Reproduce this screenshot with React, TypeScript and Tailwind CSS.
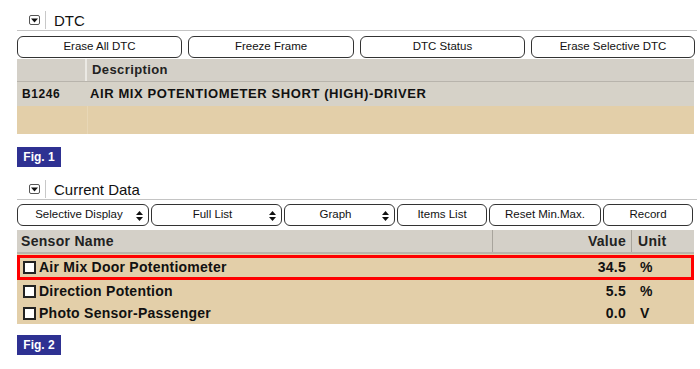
import React from "react";

const F = { fontFamily: '"Liberation Sans", Arial, sans-serif' };

function Toggle() {
  return (
    <div className="w-[11px] h-[10px] border border-[#555] rounded-[2px] bg-white flex items-center justify-center">
      <svg width="7" height="5" viewBox="0 0 7 5"><path d="M0 0.5 L7 0.5 L3.5 4.5 Z" fill="#111" /></svg>
    </div>
  );
}

function SectionHeader({ title }: { title: string }) {
  return (
    <div className="flex items-center h-[21px] border-b border-[#c4c4c4] w-[680px]">
      <div className="ml-[12px]"><Toggle /></div>
      <div className="w-px h-[18px] bg-[#c8c8c8] ml-[5px]" />
      <div className="ml-[8px] text-[15px] text-[#111] leading-none">{title}</div>
    </div>
  );
}

function Btn({ w, label, select }: { w: number; label: string; select?: boolean }) {
  return (
    <div
      className="h-[22px] border border-[#333] rounded-[6px] bg-white flex items-center justify-center text-[11.5px] text-[#111] relative"
      style={{ width: w }}
    >
      <span className={select ? "-ml-[8px]" : ""}>{label}</span>
      {select && (
        <svg className="absolute right-[5px] top-[6px]" width="7" height="10" viewBox="0 0 7 10">
          <path d="M0 4 L3.5 0 L7 4 Z M0 6 L7 6 L3.5 10 Z" fill="#111" />
        </svg>
      )}
    </div>
  );
}

function Fig({ n }: { n: string }) {
  return (
    <div className="w-[44px] h-[20px] bg-[#2e3192] text-white font-bold text-[12px] flex items-center justify-center">
      Fig. {n}
    </div>
  );
}

function Check() {
  return <div className="w-[13px] h-[13px] border-2 border-[#222] bg-white shrink-0" />;
}

const rows = [
  { name: "Air Mix Door Potentiometer", value: "34.5", unit: "%", hl: true },
  { name: "Direction Potention", value: "5.5", unit: "%" },
  { name: "Photo Sensor-Passenger", value: "0.0", unit: "V" },
];

export default function App() {
  return (
    <div className="w-[700px] h-[369px] bg-white pl-[17px] pt-[10px]" style={F}>
      <SectionHeader title="DTC" />
      <div className="flex gap-[6px] mt-[5px]">
        <Btn w={165} label="Erase All DTC" />
        <Btn w={166} label="Freeze Frame" />
        <Btn w={165} label="DTC Status" />
        <Btn w={164} label="Erase Selective DTC" />
      </div>
      <div className="w-[677px] mt-[1px]">
        <div className="flex h-[23px] bg-[#d4d0c8] border-b border-[#b8b4ac]">
          <div className="w-[70px] border-r-2 border-r-[#ebe9e4]" />
          <div className="pl-[5px] flex items-center font-bold text-[13px] text-[#222] tracking-[0.4px]">Description</div>
        </div>
        <div className="flex h-[24px] bg-[#d6d2c8] items-center font-bold text-[12px] text-[#111] tracking-[0.6px]">
          <div className="w-[72px] pl-[5px]">B1246</div>
          <div className="pl-[1px] text-[13px]">AIR MIX POTENTIOMETER SHORT (HIGH)-DRIVER</div>
        </div>
        <div className="flex h-[28px] bg-[#e3cfa9]">
          <div className="w-[71px] border-r border-r-[#e8d7b6]" />
        </div>
      </div>
      <div className="mt-[13px]"><Fig n="1" /></div>

      <div className="mt-[12px]">
        <SectionHeader title="Current Data" />
      </div>
      <div className="flex gap-[2px] mt-[4px] w-[678px]">
        <Btn w={132} label="Selective Display" select />
        <Btn w={131} label="Full List" select />
        <Btn w={111} label="Graph" select />
        <Btn w={90} label="Items List" />
        <Btn w={112} label="Reset Min.Max." />
        <Btn w={90} label="Record" />
      </div>
      <div className="w-[677px] mt-[4px] bg-[#e3cfa9]">
        <div className="flex h-[24px] bg-[#d4d0c8] border-b-2 border-[#b8b4ac] font-bold text-[14px] tracking-[0.3px] text-[#222] items-center">
          <div className="w-[476px] pl-[4px] h-full flex items-center border-r border-r-[#a8a49c]">Sensor Name</div>
          <div className="w-[139px] pr-[5px] h-full flex items-center justify-end border-r border-r-[#a8a49c]">Value</div>
          <div className="pl-[6px]">Unit</div>
        </div>
        {rows.map((r) => (
          <div
            key={r.name}
            className={
              "flex items-center font-bold text-[14px] tracking-[0.25px] text-[#111] " +
              (r.hl ? "h-[25px] border-[3px] border-[#ff0000] mt-[1px]" : "h-[22px] border-x-[3px] border-transparent")
            }
          >
            <div className="w-[473px] flex items-center gap-[3px] pl-[3px]">
              <Check />
              <span>{r.name}</span>
            </div>
            <div className="w-[139px] pr-[6px] text-right">{r.value}</div>
            <div className="pl-[8px]">{r.unit}</div>
          </div>
        ))}
      </div>
      <div className="mt-[11px]"><Fig n="2" /></div>
    </div>
  );
}
